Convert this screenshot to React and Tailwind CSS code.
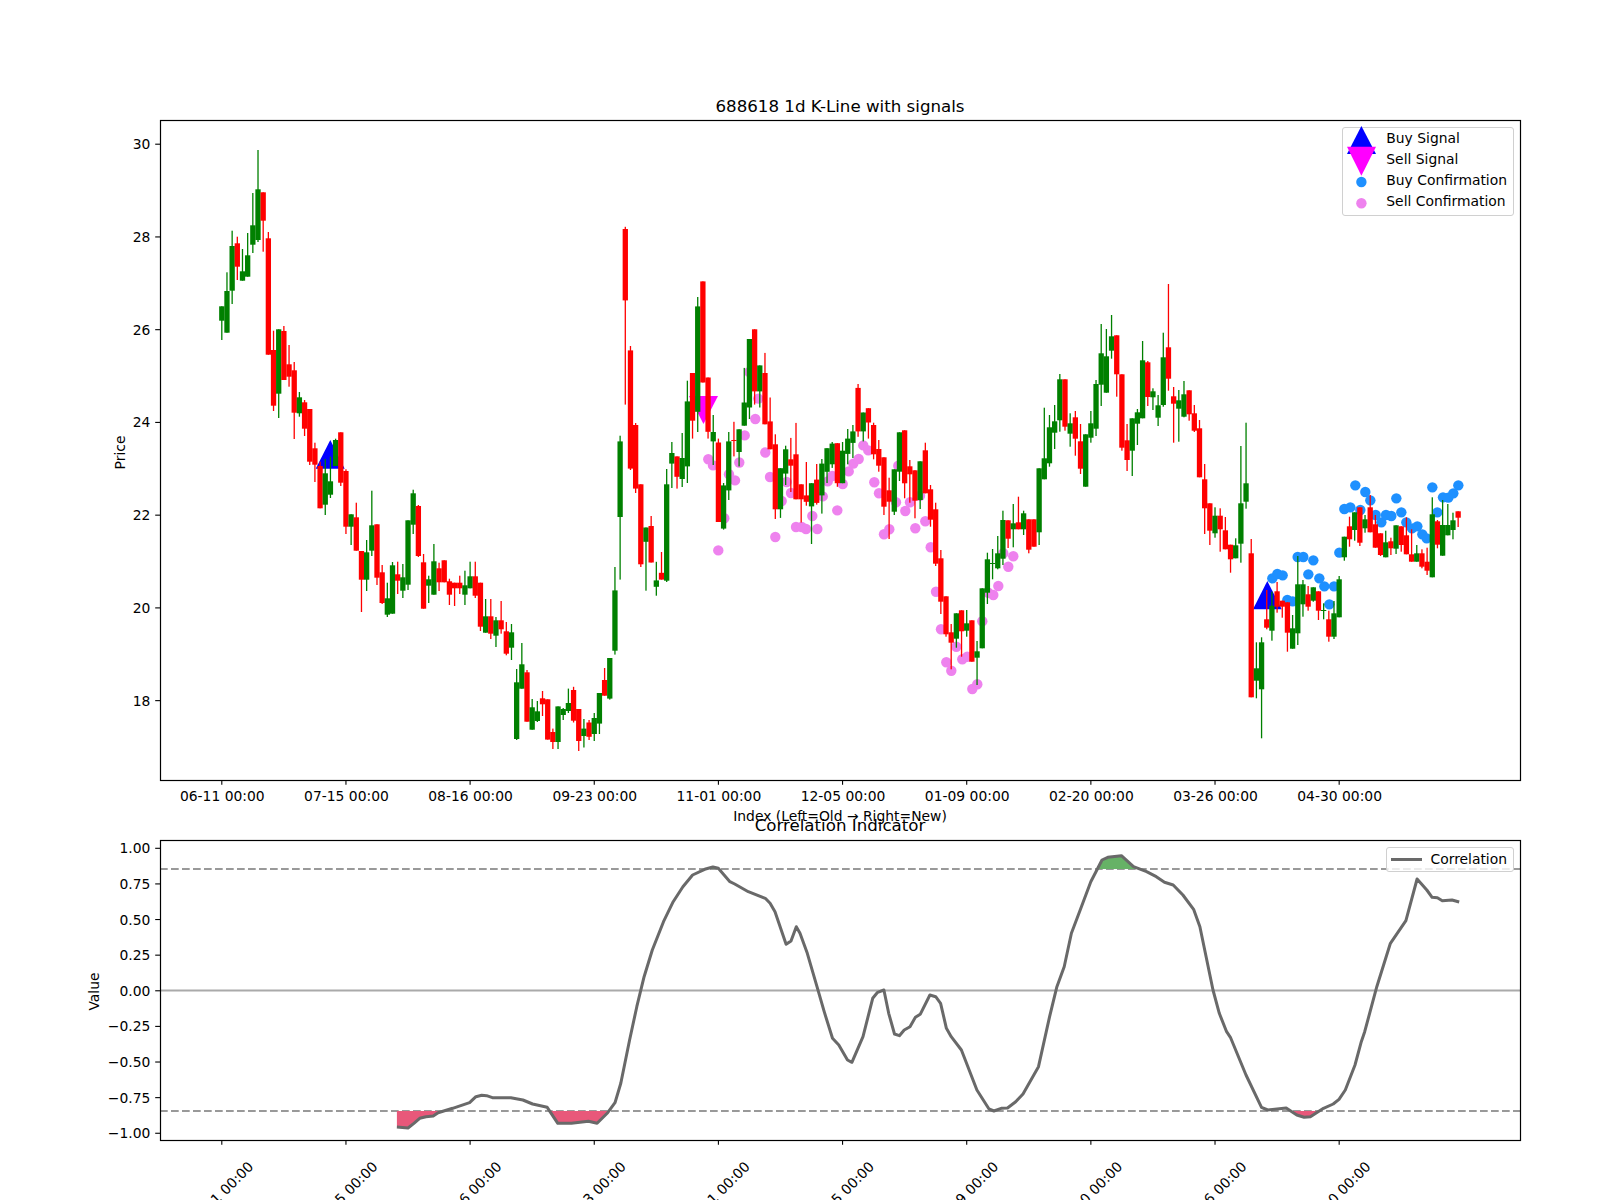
// K-line chart with signal markers and a correlation panel.
// All chart data is kept in figure pixels, read off the picture.
const candles = [
  ['g',306.3,320.7,0,340],['g',291,332.7,272.3,0],['g',246,290.7,230.7,304],['r',243.3,266.7,236.7,280],
  ['g',271.3,280.7,249,0],['g',255.3,276.7,233,0],['g',225.3,244.7,193,253],['g',189.3,240,150,242],
  ['r',192.3,220.7,0,251.7],['r',238.3,354.7,232,0],['r',350,405.7,330.7,411],['g',329.3,393.7,0,418],
  ['r',331,380,326,0],['r',364.3,376.7,345,386.7],['r',370.3,412.7,362,439],['g',397.3,413.3,392,416.7],
  ['r',402.3,428.7,400,436],['r',409,461.7,0,465],['r',448.3,464.7,442.7,482],['r',466,508.3,461.7,0],
  ['g',473.3,504.7,459,515],['g',481.3,494.7,456.7,498],['g',440,466,438.7,0],['r',432.3,482.7,0,486],
  ['r',471,526.7,469.3,534],['g',514.3,526.7,0,545],['r',517.3,550.7,502.7,0],['r',551,579.7,0,612],
  ['g',552.3,579.7,540,591],['g',525.3,550.7,490.7,556],['r',524.3,577.7,0,585],['r',572.3,603,565,604],
  ['g',598.3,614.7,582.7,617],['g',565.3,613.7,562,0],['r',574.3,580.7,561.7,594],['g',577.3,590.7,564,598],
  ['g',520.3,584.7,0,590],['g',493.3,524.7,489.7,534],['r',506,556,505,557],['r',562.3,608.7,554,0],
  ['g',579.3,585.7,575.7,603],['g',561.3,594.7,544,0],['r',568.3,582.3,562.7,591],['r',560.3,582.3,0,0],
  ['r',581.3,594.7,578.7,605],['r',582.7,588.3,0,606],['r',582.7,588.3,575.7,594],['g',585.3,594.7,570.7,605],
  ['g',576.3,588.3,561.7,0],['r',576.3,595.7,561.7,598],['r',582.7,626.7,0,631],['g',616.3,632.7,599,0],
  ['r',616.3,633.7,599,639],['g',620.3,635.7,617,647],['r',620.3,629.3,601,633.7],['r',631.3,653.7,622,655.3],
  ['g',632.3,647.7,624,660],['g',682.3,739,669,740],['g',664.3,688.7,643,0],['r',672.3,721.7,670,0],
  ['g',707.3,729.7,699,0],['g',711.3,721,701,722],['r',698.3,704.3,691,716],['r',699.3,739.6,0,0],
  ['r',732,742,728.6,749],['g',706.4,742,0,749],['g',709,715,708,720],['g',703,711,688.6,713],
  ['r',690,720.7,686.8,722.5],['r',709,741,0,751],['g',728.6,736,719,747.5],['r',722.5,736.8,720,740],
  ['g',718,734,713,741],['g',693,723.6,0,734],['r',680,695.7,668,0],['g',658,698.6,0,699.6],
  ['g',590.4,650.7,567,654.6],['g',441.4,517,435.7,579.6],['r',229,300.4,226.8,404.6],['r',350.4,468.6,346,470],
  ['r',425,488.6,423,493],['r',484.3,564.3,0,567],['g',527.5,541.8,0,590.7],['r',526,562.5,516,0],
  ['g',580.4,586.8,561.8,595.7],['r',572.8,579.6,552,0],['g',484.3,580.7,469,582],['g',453,463.6,442,488],
  ['r',456.4,476.8,0,488.6],['g',458,479,433,487],['g',401.4,466.4,380.7,483],['r',373,420.7,0,438.6],
  ['g',306.4,411.8,297,432],['r',281.4,382.5,0,0],['r',377.5,431.8,0,438.6],['g',432,441.4,415,465],
  ['r',442.5,522,438.6,0],['g',485.4,528.6,483,529.6],['g',441.4,490.4,432,500],['r',440,441,421.8,456.4],
  ['g',429.3,452,0,466.4],['g',402.5,425.7,367.9,0],['g',339,407.5,0,419],['r',329.3,391.4,0,404.6],
  ['g',365.4,391.4,0,407.5],['r',373,424.3,352.9,0],['r',421.4,449.3,397.5,0],['r',444.3,509.3,434.3,519],
  ['g',468.2,509.3,0,517.9],['g',449.3,473.6,445.7,485],['r',459.3,465.7,437.9,492],['r',454.3,499.3,422.9,0],
  ['r',484.3,499.3,0,522.5],['r',495.4,501.8,462,505.7],['g',483.2,506.4,0,544],['r',479.6,502.9,464,504.6],
  ['g',463.6,495.4,459,513.6],['g',448.2,471.8,0,483],['g',443.6,464.3,442,467.9],['r',443.2,483.2,0,486.8],
  ['g',450.7,483.2,442,0],['g',438.6,453.9,429,464.3],['g',431.4,442.9,425,458],['r',387.9,431.4,384,436.8],
  ['g',412.5,431.4,0,441.4],['r',408.2,422.5,0,438.6],['r',425,454.3,422.7,459.3],['r',449,465.7,440,471.7],
  ['r',457.3,506.7,0,515],['r',490.3,501.7,477.7,539],['g',469.3,511.7,0,515],['g',432.3,471.7,0,481],
  ['r',430.3,483.3,0,498.3],['r',466.3,474.3,460,502.7],['r',470.3,500.7,0,518.3],['g',461.3,500,0,509],
  ['r',450.3,493.3,442.7,0],['r',489.3,519.7,485,526.7],['r',509.3,563.7,502.7,566],['r',558.3,601.7,550,614],
  ['r',596.3,634.3,0,636.7],['r',632.3,642.7,624,669.3],['g',613.3,638.7,0,647.7],['r',610.3,631.3,0,656.7],
  ['g',623.3,630.7,610,636.7],['r',620.3,661.7,0,0],['g',651.3,657.7,641,685],['g',588.3,648.3,0,0],
  ['g',559.3,592.7,552.7,604],['g',563,564,549,579.3],['g',553.3,568.3,536,569.3],['g',520,558.7,510.7,565],
  ['r',520.3,538.7,0,548],['g',523.3,529.3,504,547.3],['r',522.3,529.3,496.7,0],['g',513.3,529.3,510.7,535],
  ['r',519.3,549.7,0,553.3],['r',519.3,546.7,0,0],['g',468.3,532.3,0,545],['g',458.3,479.3,407.7,0],
  ['g',427.3,463.3,415,466.7],['g',421.3,432.7,405,449],['g',379.3,420.3,374,431.7],['r',379.3,426.7,0,430.7],
  ['g',423.3,433.7,413.3,446.7],['r',417.3,438.7,411,455.7],['r',441.3,468.7,424,474],['g',434.3,486.7,0,0],
  ['g',423.3,437.7,411,442.7],['g',384,428.7,380,436],['g',353.3,384.7,324,406],['g',356.3,392.7,329,0],
  ['g',336.3,350.7,315,358.7],['r',335.3,374.3,0,396.7],['r',374.3,447.7,0,450.7],['r',440.3,460,424,471],
  ['g',418.3,450.7,0,476],['g',412.3,423.7,409,445],['g',360.3,418.3,341,0],['r',362.3,397,361,406],
  ['g',391.3,397.3,388.3,410],['g',405.3,417.7,395,426],['g',357.3,405,332.7,406.7],['r',347.3,378.7,284,390.7],
  ['r',396.3,403.7,387,442.7],['g',400.3,408.7,390,441.7],['g',394.3,416.7,381,417.3],['r',390.3,414.3,0,420.7],
  ['r',413.3,430.7,405,432],['r',428.3,477.3,420,0],['r',479.3,508.3,464,534],['r',503.3,530.7,0,545],
  ['g',515.7,533.3,507.3,537.7],['r',515.7,529.3,508.3,551.7],['r',530.3,549.3,517,0],['r',544.7,559.3,0,572.7],
  ['g',545.3,558.3,538.3,0],['g',503.3,543.7,446,562.7],['g',483.3,501.7,422.7,508.7],['r',553.3,697.3,539,0],
  ['g',668.3,680.7,642.3,698.3],['g',642.3,689.3,637.3,738.3],['r',619.3,627.7,590,629.3],['g',605.7,630.7,591.7,640.7],
  ['r',591.3,606.7,582,612.7],['r',600.7,606.7,0,617.7],['r',602.3,632.7,0,651.7],['g',628.3,648.7,615,0],
  ['g',584.3,633.3,556,645],['g',584.3,604.3,580,616.7],['r',594.3,606.7,586,610.7],['g',587.3,600.7,0,601.7],
  ['r',591.3,610.7,0,620],['g',610,611,603.3,619.3],['r',619.3,636.7,610.7,641.7],['g',613.3,636.7,601,639],
  ['g',579.3,617.3,576,0],['g',536.7,557.3,0,560.7],['r',526.3,539.3,516.7,546.7],['g',512.3,530,0,540.7],
  ['r',507.3,542.7,0,546],['g',519.3,528.3,515,532.7],['r',507.3,532.3,495,0],['r',524.3,547.7,515,0],
  ['r',533.3,555,0,556],['g',542.3,557.3,530.7,0],['r',541.3,548.3,537.7,555],['g',525.3,548.7,0,554],
  ['r',526.3,545,0,551.7],['r',535.3,554.3,517.3,0],['r',554.3,561.7,529.3,0],['g',553.3,561.7,545,0],
  ['r',553.3,566.7,549.3,568.3],['r',561.7,570.7,547.7,575],['g',514.3,577.3,497.3,0],['r',521.3,544.7,520,548.3],
  ['g',525,555.7,500,0],['g',525,535.3,504,0],['g',520.3,530,512.7,539.3],['r',511.3,517.7,0,527],
]

const sellDots = [
  [708.3,459.3],[713,465.4],[718.3,550.4],[724.3,518.2],[729,474.3],[735,480.4],[739.3,462.5],[744.7,435.4],
  [749.3,372],[755.3,419],[758.3,398.6],[765.3,452.5],[770,477],[775.3,537],[781.7,501],[786.7,482],[791,493],
  [796,527],[801.7,527],[806,529],[812.3,516],[817.3,529],[822.7,496.4],[827.7,481.4],[832.3,476],[837.3,510.4],
  [842.7,484],[848.7,471.4],[853.3,463.6],[858.7,459],[863.3,445.4],[868.3,450.4],[874.3,482.3],[879,493.3],
  [884,534.3],[889.3,529.3],[896,502.3],[898.3,465.7],[905.3,511],[910,502.3],[915.3,528.3],[920,495.7],
  [925.3,521.3],[930.7,547.3],[936,591.7],[941,629.3],[946.3,662.3],[951.3,670.7],[956.3,646.7],[962.3,659.3],
  [967.3,656.7],[972.3,689],[977.3,684.3],[982.3,621.3],[988.3,592.7],[993.3,595],[998.3,586],[1003.3,553.3],
  [1008.3,566.7],[1013.3,556.3],
]

// read from a 3x crop starting at (1190, 270)
const buyDots = [
  [247,925],[262,912],[278,916],[292,990],[308,994],[323,861],[340,861],[355,913],[370,871],[388,925],[403,949],
  [418,1003],[432,949],[448,848],[463,717],[481,712],[496,646],[511,720],[526,666],[541,691],[557,735],[574,757],
  [588,735],[604,738],[619,685],[634,727],[649,757],[666,775],[682,769],[697,793],[710,805],[727,652],[742,727],
  [759,682],[775,683],[790,670],[805,646],
].map(([x, y]) => [1190 + x / 3, 270 + y / 3])

// correlation line, read from two crops (x scale 2.063, y scale 3)
const corrLeft = [
  [695,1041],[718,1044],[730,1030],[742,1015],[755,1010],[770,1008],[780,998],[810,985],[845,968],[858,950],
  [870,946],[880,947],[892,953],[930,953],[955,960],[975,972],[1005,982],[1027,1030],[1055,1030],[1090,1024],
  [1108,1030],[1130,998],[1145,968],[1157,910],[1175,780],[1190,680],[1205,590],[1222,510],[1245,425],[1265,365],
  [1285,320],[1305,285],[1330,268],[1347,261],[1358,265],[1382,305],[1392,312],[1420,335],[1455,355],[1465,370],
  [1475,395],[1498,493],[1508,483],[1519,440],
].map(([x, y]) => [60 + x / 2.063, 780 + y / 3])
const corrRight = [
  [0,460],[15,520],[35,620],[50,695],[67,775],[80,795],[98,840],[107,847],[130,770],[150,655],[160,637],[173,630],
  [183,700],[195,762],[205,767],[215,750],[227,740],[238,712],[248,703],[268,645],[280,650],[290,670],[302,745],
  [312,770],[333,810],[365,930],[390,987],[400,993],[415,985],[428,984],[445,965],[460,942],[492,860],[515,710],
  [530,620],[545,560],[560,460],[578,390],[600,305],[623,240],[635,232],[663,227],[688,260],[715,275],[735,290],
  [752,307],[770,315],[790,345],[812,388],[825,440],[852,630],[865,700],[880,755],[888,772],[920,885],[952,982],
  [965,990],[1003,984],[1025,1005],[1040,1012],[1053,1010],[1080,985],[1100,972],[1112,958],[1125,930],[1145,855],
  [1158,785],[1165,755],[1190,620],[1218,490],[1250,422],[1273,297],[1293,330],[1304,352],[1315,353],[1325,362],
  [1345,360],[1360,366],
].map(([x, y]) => [800 + x / 2.063, 780 + y / 3])
const corrAll = [...corrLeft, ...corrRight]
const corrPoints = corrAll.map(([x, y]) => `${x.toFixed(1)},${y.toFixed(1)}`).join(' ')
// close the shape along a threshold so only the part past it gets filled
const closedAt = (y) => `${corrPoints} ${corrAll[corrAll.length - 1][0].toFixed(1)},${y} ${corrAll[0][0].toFixed(1)},${y}`

const xAt = (i) => 221.8 + 5.173 * i
const dateTicks = ['06-11 00:00', '07-15 00:00', '08-16 00:00', '09-23 00:00', '11-01 00:00', '12-05 00:00', '01-09 00:00', '02-20 00:00', '03-26 00:00', '04-30 00:00']
const priceTicks = [18, 20, 22, 24, 26, 28, 30]
const corrTicks = ['1.00', '0.75', '0.50', '0.25', '0.00', '−0.25', '−0.50', '−0.75', '−1.00']

function Candle({ c, i }) {
  const [color, top, bottom, wickTop, wickBottom] = c
  const x = xAt(i)
  const fill = color === 'g' ? '#008000' : '#ff0000'
  return (
    <g>
      <rect x={x - 0.65} y={wickTop || top} width={1.3} height={(wickBottom || bottom) - (wickTop || top)} fill={fill} />
      <rect x={x - 2.65} y={top} width={5.3} height={bottom - top} fill={fill} />
    </g>
  )
}

function YTick({ y, label }) {
  return (
    <g>
      <line x1={155.2} x2={160} y1={y} y2={y} stroke="black" strokeWidth={1.1} />
      <text x={150.4} y={y + 5} textAnchor="end" fontSize={13.89}>{label}</text>
    </g>
  )
}

function PriceChart() {
  return (
    <svg viewBox="160 120 1360 660" className="w-[1360px] h-[660px] overflow-visible block" fill="black">
      <polygon points="315.7,468.7 344.7,468.7 330.3,440" fill="#0000ff" />
      <polygon points="1253,609.3 1281.7,609.3 1267.3,581" fill="#0000ff" />
      <polygon points="689,396 718,396 703.5,424" fill="#ff00ff" />
      {sellDots.map(([x, y], i) => <circle key={i} cx={x} cy={y} r={5.2} fill="#ee82ee" />)}
      {buyDots.map(([x, y], i) => <circle key={i} cx={x} cy={y} r={5.2} fill="#1e90ff" />)}
      {candles.map((c, i) => <Candle key={i} c={c} i={i} />)}
      <rect x={160.5} y={120.5} width={1360} height={660} fill="none" stroke="black" strokeWidth={1.2} />
      {priceTicks.map((p) => <YTick key={p} y={144.2 + (30 - p) * 46.37} label={p} />)}
      {dateTicks.map((d, i) => (
        <g key={d}>
          <line x1={xAt(i * 24)} x2={xAt(i * 24)} y1={780} y2={784.8} stroke="black" strokeWidth={1.1} />
          <text x={xAt(i * 24) + 0.5} y={800.5} textAnchor="middle" fontSize={13.89}>{d}</text>
        </g>
      ))}
      <text x={0} y={0} transform="translate(124.5 452.5) rotate(-90)" textAnchor="middle" fontSize={13.89}>Price</text>
    </svg>
  )
}

function CorrelationChart() {
  return (
    <svg viewBox="160 840 1360 300" className="w-[1360px] h-[300px] overflow-visible block" fill="black">
      <defs>
        <clipPath id="below-low"><rect x={160} y={1111} width={1360} height={29} /></clipPath>
        <clipPath id="above-high"><rect x={160} y={840} width={1360} height={29} /></clipPath>
      </defs>
      <line x1={160} x2={1520} y1={990.5} y2={990.5} stroke="#aaaaaa" strokeWidth={2} />
      <line x1={160} x2={1520} y1={869} y2={869} stroke="#999999" strokeWidth={2.1} strokeDasharray="7.7 3.3" />
      <line x1={160} x2={1520} y1={1111} y2={1111} stroke="#999999" strokeWidth={2.1} strokeDasharray="7.7 3.3" />
      <polygon points={closedAt(1111)} fill="#e8587a" clipPath="url(#below-low)" />
      <polygon points={closedAt(869)} fill="#66b266" clipPath="url(#above-high)" />
      <polyline points={corrPoints} fill="none" stroke="#696969" strokeWidth={3} strokeLinejoin="round" />
      <rect x={160.5} y={840.5} width={1360} height={300} fill="none" stroke="black" strokeWidth={1.2} />
      {corrTicks.map((t, i) => <YTick key={t} y={848.3 + i * 35.62} label={t} />)}
      {dateTicks.map((d, i) => (
        <g key={d}>
          <line x1={xAt(i * 24)} x2={xAt(i * 24)} y1={1140} y2={1144.8} stroke="black" strokeWidth={1.1} />
          <text x={0} y={0} transform={`translate(${xAt(i * 24) + 2.5} 1197.5) rotate(-45)`} textAnchor="middle" fontSize={13.89}>{d}</text>
        </g>
      ))}
      <text x={0} y={0} transform="translate(99 991.5) rotate(-90)" textAnchor="middle" fontSize={13.89}>Value</text>
    </svg>
  )
}

function LegendRow({ label, children }) {
  return (
    <div className="flex items-center h-[21px]">
      <svg viewBox="0 0 37 21" className="w-[37px] h-[21px] mr-[6px] overflow-visible shrink-0">{children}</svg>
      <span>{label}</span>
    </div>
  )
}

export default function App() {
  return (
    <div className="w-[1600px] h-[1200px] overflow-hidden bg-white text-black flex flex-col font-['DejaVu_Sans',sans-serif]">
      <div className="h-[120px] ml-[160px] w-[1360px] flex items-end justify-center pb-[3px] text-[16.67px] leading-[20px]">
        688618 1d K-Line with signals
      </div>
      <div className="relative ml-[160px] w-[1360px] h-[660px]">
        <PriceChart />
        <div className="absolute left-[1182.3px] top-[7px] w-[172px] h-[89px] bg-white/80 border border-[#d0d0d0] rounded-[3px] text-[13.89px] leading-[16px]">
          <div className="-mt-px">
            <LegendRow label="Buy Signal"><polygon points="18.4,-1 33,27 4,27" fill="#0000ff" /></LegendRow>
            <LegendRow label="Sell Signal"><polygon points="4,-1.3 33,-1.3 18.4,27.7" fill="#ff00ff" /></LegendRow>
            <LegendRow label="Buy Confirmation"><circle cx={18.4} cy={13} r={5.2} fill="#1e90ff" /></LegendRow>
            <LegendRow label="Sell Confirmation"><circle cx={18.4} cy={13.3} r={5.2} fill="#ee82ee" /></LegendRow>
          </div>
        </div>
      </div>
      <div className="grid h-[60px] justify-items-center ml-[160px] w-[1360px]">
        <div className="[grid-area:1/1] mt-[28px] text-[13.89px] leading-[16px]">Index (Left=Old → Right=New)</div>
        <div className="[grid-area:1/1] self-end pb-[4px] text-[16.67px] leading-[20px]">Correlation Indicator</div>
      </div>
      <div className="relative ml-[160px] w-[1360px] h-[300px]">
        <CorrelationChart />
        <div className="absolute left-[1225.5px] top-[7px] w-[128px] h-[24.6px] bg-white/80 border border-[#d0d0d0] rounded-[3px] flex items-center text-[13.89px] leading-[16px]">
          <span className="w-[31px] h-[3px] ml-[4px] mr-[9px] bg-[#696969]" />
          <span>Correlation</span>
        </div>
      </div>
    </div>
  )
}
